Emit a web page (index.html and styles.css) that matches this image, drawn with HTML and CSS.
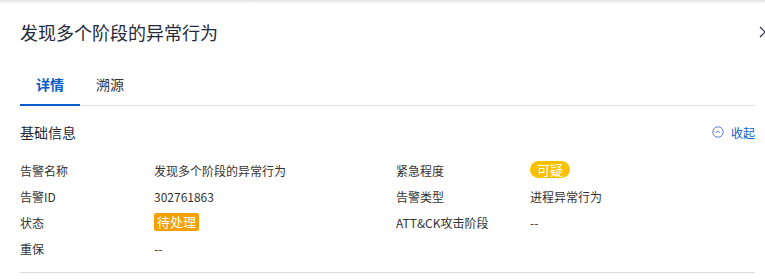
FILE: index.html
```html
<!DOCTYPE html>
<html>
<head>
<meta charset="UTF-8">
<meta name="viewport" content="width=device-width, initial-scale=1.0">
<title>告警详情</title>
<link rel="stylesheet" href="styles.css">
</head>
<body>
<div class="top-shadow"></div>
<div class="drawer">
  <div class="header">
    <div class="title">发现多个阶段的异常行为</div>
    <svg class="close" width="12" height="12" viewBox="0 0 12 12">
      <path d="M1 1 L11 11 M11 1 L1 11" stroke="#252b3a" stroke-width="1.2" fill="none"/>
    </svg>
  </div>

  <div class="tabs">
    <div class="tab active">详情</div>
    <div class="tab">溯源</div>
  </div>

  <div class="section-head">
    <div class="section-title">基础信息</div>
    <div class="collapse">
      <svg width="12" height="12" viewBox="0 0 12 12">
        <circle cx="6" cy="6" r="5.2" stroke="#5e7ce0" stroke-width="1" fill="none"/>
        <path d="M3.8 7 L6 4.8 L8.2 7" stroke="#5e7ce0" stroke-width="1" fill="none"/>
      </svg>
      <span>收起</span>
    </div>
  </div>

  <div class="info">
    <div class="label">告警名称</div>
    <div class="value">发现多个阶段的异常行为</div>
    <div class="label">紧急程度</div>
    <div class="value"><span class="badge badge-doubt">可疑</span></div>

    <div class="label">告警ID</div>
    <div class="value">302761863</div>
    <div class="label">告警类型</div>
    <div class="value">进程异常行为</div>

    <div class="label">状态</div>
    <div class="value"><span class="badge badge-pending">待处理</span></div>
    <div class="label">ATT&amp;CK攻击阶段</div>
    <div class="value">--</div>

    <div class="label">重保</div>
    <div class="value">--</div>
    <div class="label"></div>
    <div class="value"></div>
  </div>

  <div class="divider"></div>
</div>
</body>
</html>
```

FILE: styles.css
```css
body {
  margin: 0;
  padding: 0;
  background: #fff;
  font-family: "Noto Sans CJK SC", "Liberation Sans", sans-serif;
  color: #333;
  overflow: hidden;
}

.top-shadow {
  height: 4px;
  background: linear-gradient(to bottom, #e2e2e2, #fff);
}

.drawer {
  padding: 0 10px 0 20px;
}

.header {
  display: flex;
  justify-content: space-between;
  align-items: center;
  padding-top: 16px;
  height: 24px;
  margin-right: -10px;
}

.title {
  font-size: 18px;
  line-height: 24px;
  color: #252b3a;
}

.close {
  margin-right: -6px;
  margin-top: 0;
}

.tabs {
  display: flex;
  margin-top: 30px;
  border-bottom: 1px solid #dfe1e6;
}

.tab {
  font-size: 14px;
  line-height: 20px;
  padding: 0 16px 10px;
  margin-bottom: -1px;
  border-bottom: 2px solid transparent;
  color: #333;
}

.tab.active {
  color: #0a5ec9;
  font-weight: bold;
  border-bottom-color: #0a5ec9;
}

.section-head {
  display: flex;
  justify-content: space-between;
  align-items: center;
  margin-top: 16px;
  height: 20px;
}

.section-title {
  font-size: 14px;
  line-height: 20px;
  color: #252b3a;
}

.collapse {
  display: flex;
  align-items: center;
  gap: 7px;
  font-size: 12px;
  color: #0a5ec9;
}

.info {
  display: grid;
  grid-template-columns: 134px 242px 134px 1fr;
  grid-auto-rows: 26px;
  margin-top: 15px;
  font-size: 12px;
}

.label,
.value {
  display: flex;
  align-items: center;
}

.badge {
  color: #fff;
  font-size: 13px;
  line-height: 18px;
  height: 18px;
}

.badge-doubt {
  background: #f8c100;
  border-radius: 9px;
  padding: 0 7px;
  margin-top: -1px;
  height: 17px;
  line-height: 17px;
}

.badge-pending {
  background: #f3a000;
  border-radius: 2px;
  padding: 0 3px;
}

.divider {
  margin-top: 11px;
  border-top: 1px solid #d9d9d9;
}
```
